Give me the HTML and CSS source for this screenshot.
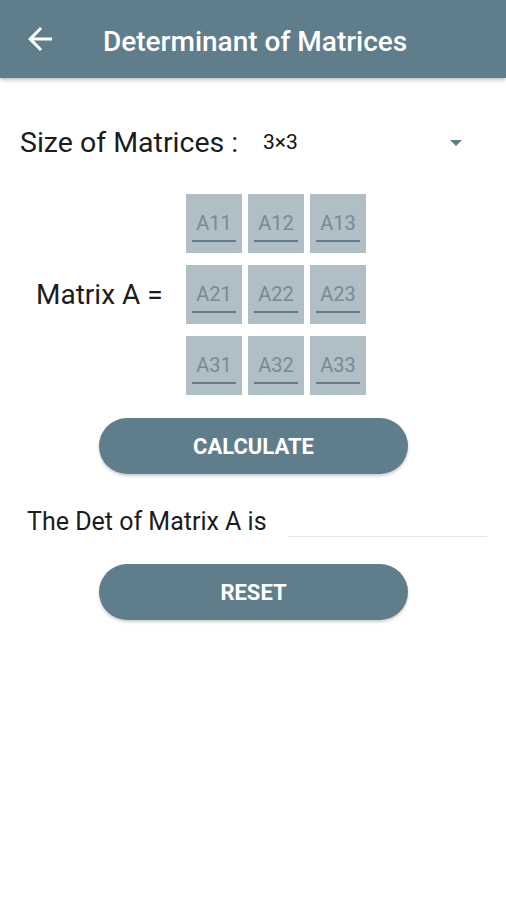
FILE: index.html
```html
<html>

<head>
    <title>Determinant of Matrices</title>
    <link rel="stylesheet" href="styles.css">
</head>

<body>
    <div id="topbar">
        <svg class="back" width="24" height="24" viewBox="0 0 24 24">
            <path d="M20 11H7.83l5.59-5.59L12 4l-8 8 8 8 1.41-1.41L7.83 13H20v-2z" fill="white"/>
        </svg>
        <h1>Determinant of Matrices</h1>
    </div>
    <div id="content">
        <div class="sizerow">
            <p class="sizelabel">Size of Matrices :</p>
            <div class="spinner">
                <span>3×3</span>
                <span class="caret"></span>
            </div>
        </div>
        <div class="matrixrow">
            <p class="matrixlabel">Matrix A =</p>
            <div class="grid">
                <div class="cell"><span>A11</span></div>
                <div class="cell"><span>A12</span></div>
                <div class="cell"><span>A13</span></div>
                <div class="cell"><span>A21</span></div>
                <div class="cell"><span>A22</span></div>
                <div class="cell"><span>A23</span></div>
                <div class="cell"><span>A31</span></div>
                <div class="cell"><span>A32</span></div>
                <div class="cell"><span>A33</span></div>
            </div>
        </div>
        <button class="pill" id="calc">CALCULATE</button>
        <div class="detrow">
            <p class="detlabel">The Det of Matrix A is</p>
            <div class="result"></div>
        </div>
        <button class="pill" id="reset">RESET</button>
    </div>
</body>

</html>
```

FILE: styles.css
```css
* {
    margin: 0;
    padding: 0;
}

body {
    background-color: white;
    font-family: 'Roboto', sans-serif;
    color: #1c1c1c;
}

#topbar {
    background-color: #607d8b;
    height: 78px;
    display: flex;
    align-items: center;
    padding-left: 22px;
    box-shadow: 0 2px 4px rgba(0, 0, 0, 0.25);
}
#topbar .back {
    width: 36px;
    height: 36px;
}
#topbar h1 {
    color: white;
    font-size: 28px;
    font-weight: 500;
    margin-left: 45px;
    margin-top: 4px;
}

#content {
    display: flex;
    flex-direction: column;
}

.sizerow {
    display: flex;
    align-items: center;
    height: 50px;
    margin-top: 39px;
    padding-left: 20px;
}
.sizelabel {
    font-size: 28.5px;
    width: 243px;
}
.spinner {
    display: flex;
    align-items: center;
    width: 199px;
    justify-content: space-between;
    font-size: 21px;
    color: #111;
}
.caret {
    width: 0;
    height: 0;
    border-left: 6px solid transparent;
    border-right: 6px solid transparent;
    border-top: 6px solid #607d8b;
    margin-top: 2px;
}

.matrixrow {
    display: flex;
    align-items: center;
    margin-top: 27px;
    padding-left: 36px;
}
.matrixlabel {
    font-size: 28px;
    width: 150px;
}
.grid {
    display: grid;
    grid-template-columns: 56px 56px 56px;
    grid-auto-rows: 59px;
    column-gap: 6px;
    row-gap: 12px;
}
.cell {
    background-color: #b0bec5;
    padding: 18px 6px 0 6px;
}
.cell span {
    display: block;
    text-align: center;
    font-size: 20px;
    line-height: 23px;
    color: #788a94;
    padding-bottom: 5px;
    border-bottom: 2px solid #667d89;
}

.pill {
    align-self: flex-start;
    margin-left: 99px;
    width: 309px;
    height: 56px;
    border: none;
    border-radius: 28px;
    background-color: #607d8b;
    color: white;
    font-family: 'Roboto', sans-serif;
    font-size: 22px;
    font-weight: 700;
    box-shadow: 0 2px 3px rgba(0, 0, 0, 0.2);
}
#calc {
    margin-top: 23px;
}
#reset {
    margin-top: 19px;
}

.detrow {
    display: flex;
    align-items: center;
    height: 48px;
    margin-top: 23px;
    padding-left: 27px;
}
.detlabel {
    font-size: 25px;
    width: 261px;
}
.result {
    width: 199px;
    height: 31px;
    border-bottom: 1px solid #e6e6e6;
}
```
